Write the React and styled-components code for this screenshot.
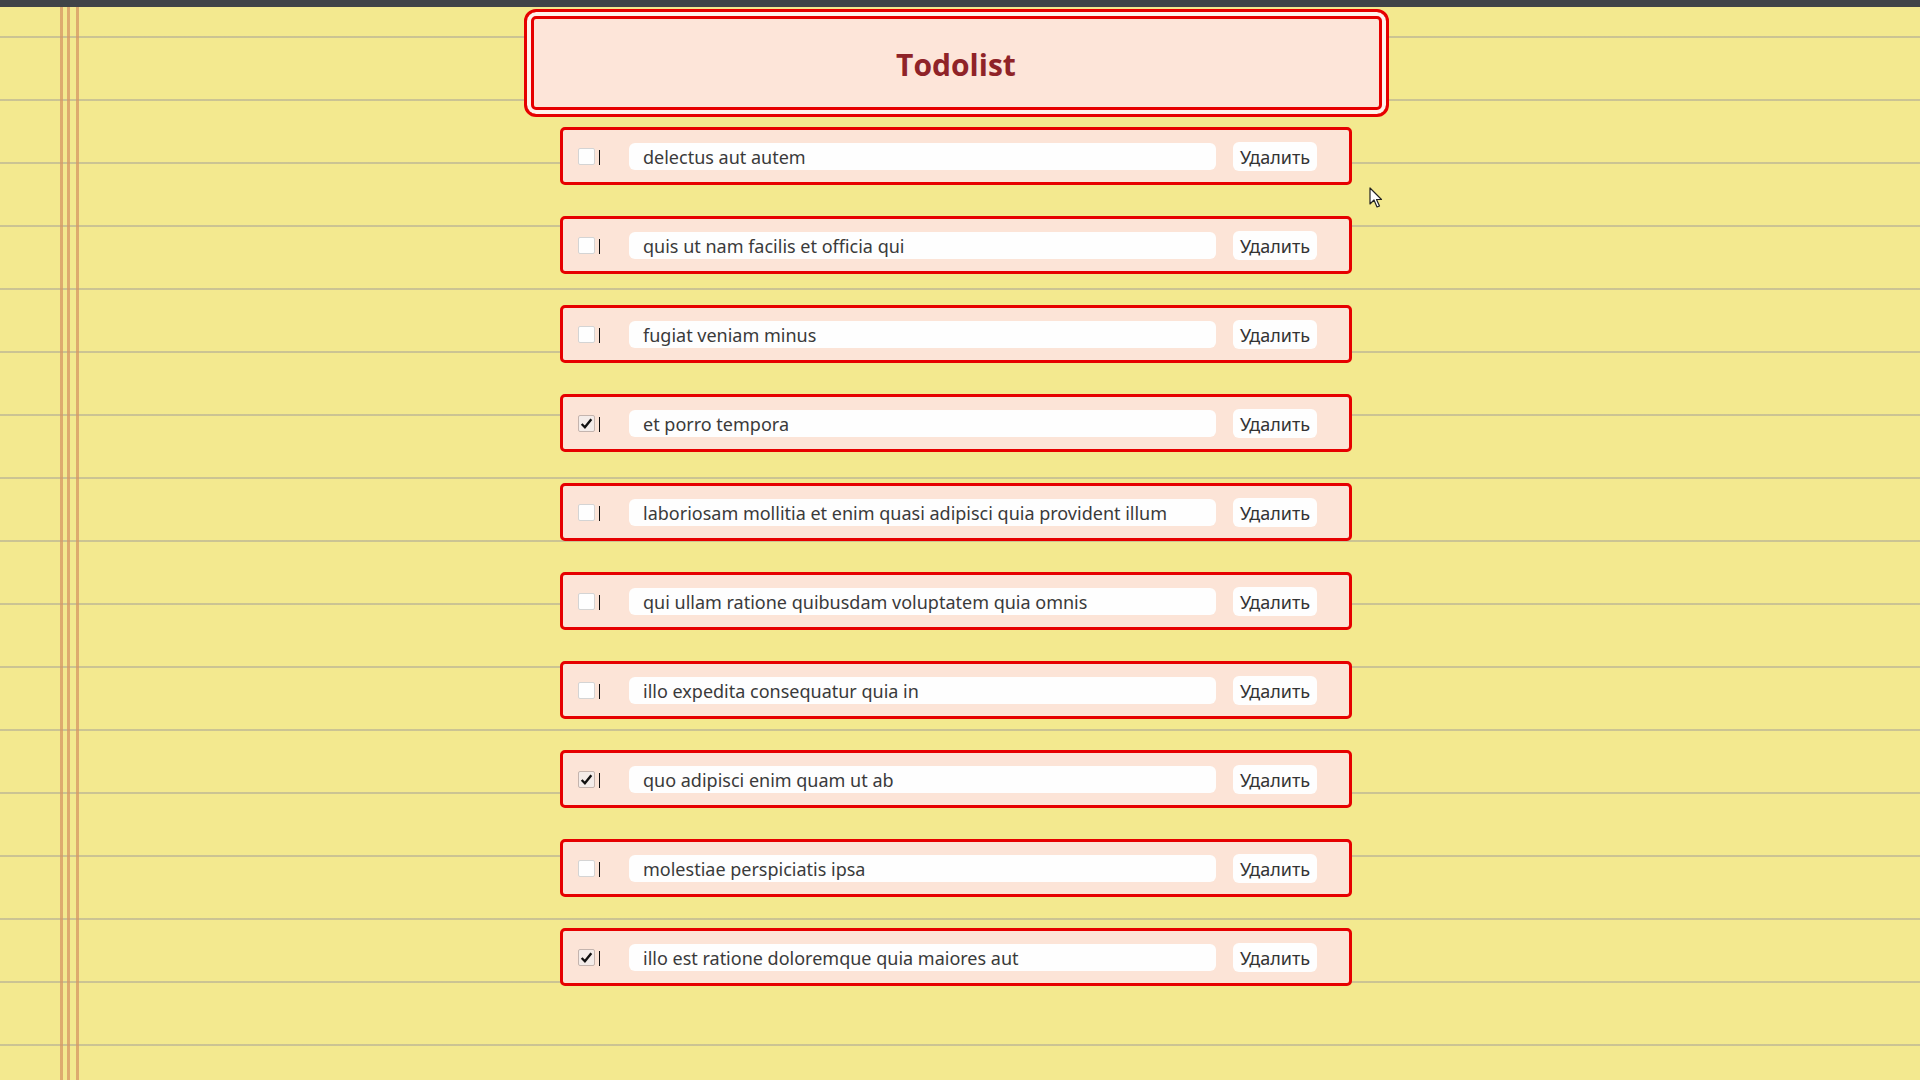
import React from "react";
import styled, { createGlobalStyle } from "styled-components";

const todos = [
    { id: 1, title: "delectus aut autem", completed: false },
    { id: 2, title: "quis ut nam facilis et officia qui", completed: false },
    { id: 3, title: "fugiat veniam minus", completed: false },
    { id: 4, title: "et porro tempora", completed: true },
    { id: 5, title: "laboriosam mollitia et enim quasi adipisci quia provident illum", completed: false },
    { id: 6, title: "qui ullam ratione quibusdam voluptatem quia omnis", completed: false },
    { id: 7, title: "illo expedita consequatur quia in", completed: false },
    { id: 8, title: "quo adipisci enim quam ut ab", completed: true },
    { id: 9, title: "molestiae perspiciatis ipsa", completed: false },
    { id: 10, title: "illo est ratione doloremque quia maiores aut", completed: true },
];

const GlobalStyle = createGlobalStyle`
    html, body {
        margin: 0;
        padding: 0;
    }

    body {
        min-height: 100vh;
        font-family: "Noto Sans", "Open Sans", sans-serif;
        background-color: #f3e98f;
        background-image:
            linear-gradient(to right,
                transparent 0 60px,
                rgba(214, 150, 100, 0.75) 60px 63px,
                transparent 63px 67px,
                rgba(214, 150, 100, 0.75) 67px 70px,
                transparent 70px 76px,
                rgba(214, 150, 100, 0.75) 76px 79px,
                transparent 79px),
            repeating-linear-gradient(to bottom,
                transparent 0 36px,
                rgba(170, 165, 150, 0.55) 36px 38px,
                transparent 38px 63px);
    }
`;

function App() {
    return (
        <>
            <GlobalStyle />
            <TopBar />
            <Page>
                <Header>
                    <Title>Todolist</Title>
                </Header>
                <List>
                    {todos.map((todo) => (
                        <Item key={todo.id}>
                            <Check checked={todo.completed}>
                                {todo.completed && (
                                    <svg width="15" height="15" viewBox="0 0 14 14">
                                        <path d="M2.5 7.5 L5.5 10.5 L11.5 3" fill="none" stroke="#111" strokeWidth="2.2" />
                                    </svg>
                                )}
                            </Check>
                            <Caret />
                            <TitleInput readOnly defaultValue={todo.title} />
                            <DeleteButton>Удалить</DeleteButton>
                        </Item>
                    ))}
                </List>
            </Page>
            <Cursor width="14" height="22" viewBox="0 0 14 22">
                <path d="M1 1 L1 17 L5 13 L8 20 L10.5 19 L7.5 12.5 L12.5 12.5 Z" fill="#fff" stroke="#222" strokeWidth="1.2" strokeLinejoin="round" />
            </Cursor>
        </>
    );
}

const TopBar = styled.div`
    height: 7px;
    background: #404448;
`

const Page = styled.div`
    display: flex;
    flex-direction: column;
    align-items: center;
    padding: 2px 8px 0 0;
`

const Header = styled.div`
    box-sizing: border-box;
    width: 865px;
    height: 108px;
    border: 3px solid #e60000;
    border-radius: 12px;
    background: #fde5d9;
    box-shadow: inset 0 0 0 4px #fff2ec, inset 0 0 0 7px #e60000;
    display: flex;
    align-items: center;
    justify-content: center;
`

const Title = styled.h1`
    margin: 0;
    font-family: "Open Sans", "Noto Sans", sans-serif;
    font-size: 30px;
    font-weight: 700;
    color: #8f2328;
    transform: translateY(1px);
`

const List = styled.div`
    display: flex;
    flex-direction: column;
    gap: 31px;
    margin-top: 10px;
`

const Item = styled.div`
    box-sizing: border-box;
    width: 792px;
    height: 58px;
    border: 3px solid #e60000;
    border-radius: 5px;
    background: #fce4d7;
    display: flex;
    align-items: center;
    padding: 1px 32px 0 15px;
`

const Check = styled.span`
    box-sizing: border-box;
    width: 17px;
    height: 17px;
    border: 1px solid ${(p) => (p.checked ? "#c4b4ae" : "#d4d4d4")};
    border-radius: 2px;
    background: ${(p) => (p.checked ? "#f4ece9" : "#fefefe")};
    display: flex;
    align-items: center;
    justify-content: center;
`

const Caret = styled.span`
    width: 1px;
    height: 15px;
    background: #111;
    margin: 2px 29px 0 4px;
`

const TitleInput = styled.input`
    box-sizing: border-box;
    width: 587px;
    height: 27px;
    border: none;
    outline: none;
    border-radius: 6px;
    background: #fefefe;
    padding: 0 0 0 14px;
    font-family: "Noto Sans", "Open Sans", sans-serif;
    font-size: 18px;
    color: #3a3a3a;
`

const DeleteButton = styled.button`
    box-sizing: border-box;
    width: 84px;
    height: 29px;
    margin-left: 17px;
    border: none;
    border-radius: 6px;
    background: #fefefe;
    padding: 0;
    font-family: "Noto Sans", "Open Sans", sans-serif;
    font-size: 18px;
    color: #333;
    cursor: pointer;
`

const Cursor = styled.svg`
    position: absolute;
    left: 1369px;
    top: 187px;
`

export default App;
